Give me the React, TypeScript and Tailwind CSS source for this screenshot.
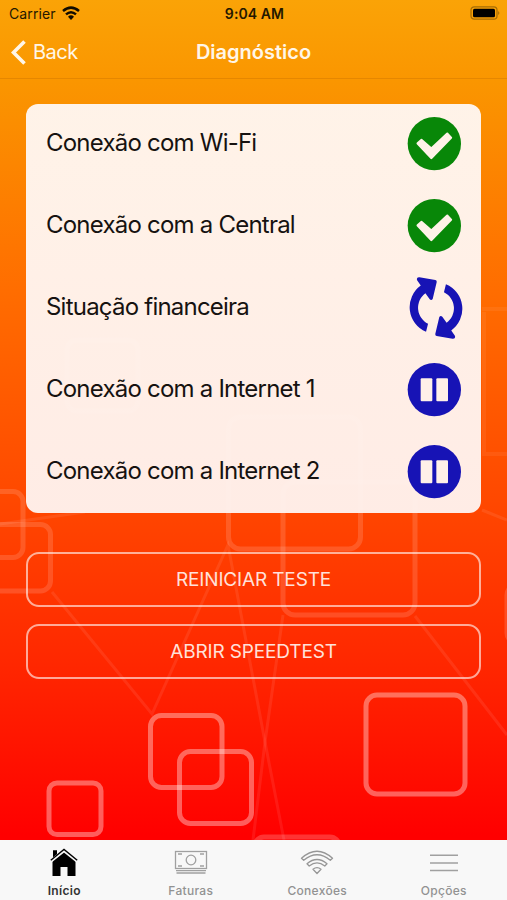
import React from 'react';

type Status = 'ok' | 'running' | 'waiting';

const CHECKS: { label: string; status: Status }[] = [
  { label: 'Conexão com Wi-Fi', status: 'ok' },
  { label: 'Conexão com a Central', status: 'ok' },
  { label: 'Situação financeira', status: 'running' },
  { label: 'Conexão com a Internet 1', status: 'waiting' },
  { label: 'Conexão com a Internet 2', status: 'waiting' },
];

function StatusIcon({ status }: { status: Status }) {
  if (status === 'running') {
    const arrow =
      'M51 165A80 80 0 0 1 35 26L24 10Q21 0 31 1L79 9Q84 10 83 16L71 66Q67 72 62 67L49 49A54 54 0 0 0 57 141Z';
    return (
      <svg viewBox="0 0 162 187" className="w-[54px] h-[62px] translate-x-[2px]" fill="#1713b5">
        <path d={arrow} />
        <path d={arrow} transform="rotate(180 81 93.5)" />
      </svg>
    );
  }
  return (
    <svg viewBox="-2 0 162 162" className="w-[54px] h-[54px] overflow-visible">
      <circle cx="80" cy="80" r="80" fill={status === 'ok' ? '#088708' : '#1713b5'} />
      {status === 'ok' ? (
        <path
          d="M30 79L41 69L71 95L119 50L130 62L71 123Z"
          fill="#fff2e8"
          stroke="#fff2e8"
          strokeWidth="7"
          strokeLinejoin="round"
        />
      ) : (
        <g fill="#fff0e8">
          <rect x="39" y="46" width="35" height="69" rx="3" />
          <rect x="86" y="46" width="35" height="69" rx="3" />
        </g>
      )}
    </svg>
  );
}

// Rounded squares joined by thin lines
function Backdrop() {
  return (
    <svg viewBox="0 0 507 900" className="absolute inset-0 w-full h-full" fill="none" stroke="#fff">
      <g strokeWidth="5" strokeOpacity="0.14">
        <rect x="-44" y="491.5" width="67" height="66" rx="10" />
        <rect x="-17" y="524.5" width="67.5" height="66.5" rx="10" />
        <rect x="228.5" y="417" width="132" height="132" rx="12" />
        <rect x="283" y="482" width="132" height="133" rx="12" />
        <rect x="67" y="340" width="71" height="71" rx="10" />
        <rect x="507" y="585" width="60" height="58" rx="10" />
      </g>
      <g strokeWidth="4" strokeOpacity="0.06">
        <path d="M482 309H507M484 312V454M482 454H507" />
      </g>
      <g strokeWidth="5" strokeOpacity="0.36">
        <rect x="150.5" y="715.5" width="71.5" height="72" rx="11" />
        <rect x="179.5" y="751.5" width="72" height="72" rx="11" />
        <rect x="49" y="783" width="52" height="51.5" rx="8" />
        <rect x="366" y="695" width="99" height="99" rx="11" />
      </g>
      <rect x="255" y="837" width="84" height="60" rx="9" strokeWidth="5" strokeOpacity="0.2" />
      <g strokeWidth="3" strokeOpacity="0.08">
        <path d="M52 592L152 714L228 545L265 742L284 840" />
        <path d="M283 615L265 742L253 840" />
        <path d="M415 616L507 735M482 510L507 520M0 524L85 512" />
      </g>
    </svg>
  );
}

function HomeIcon() {
  return (
    <svg viewBox="0 0 28 29" className="w-7 h-[29px]">
      <path d="M3 11V2.5H7V7.5L14 2.5L25.5 12.5V28H17.5V19H10.5V28H2.5V13Z" fill="#000" />
      <path d="M.8 13L14 2.5L27.2 13" fill="none" stroke="#f7f7f7" strokeWidth="3.4" />
      <path d="M3 9V2.5H7V6Z" fill="#000" />
      <path d="M.8 12.2L14 1.4L27.2 12.2" fill="none" stroke="#000" strokeWidth="1.4" />
    </svg>
  );
}

function BillsIcon() {
  return (
    <svg viewBox="0 0 34 29" className="w-[34px] h-[29px]" fill="none" stroke="#a0a0a0" strokeWidth="1.3">
      <rect x="1.5" y="3.5" width="31" height="17" />
      <circle cx="17" cy="12" r="4.8" />
      <path d="M4 6H8M26 6H30M4 18H8M26 18H30M2 22.7H32M2.5 25H31.5" />
    </svg>
  );
}

function ConnectionsIcon() {
  return (
    <svg viewBox="0 0 34 29" className="w-[34px] h-[29px]" fill="none" stroke="#979797" strokeWidth="1.3" strokeLinejoin="round">
      <path d="M1.5 10.2Q17-3.8 32.5 10.2L30.3 12.3Q17 1.2 3.7 12.3Z" />
      <path d="M7 15.8Q17 7.2 27 15.8L24.8 18Q17 11.8 9.2 18Z" />
      <path d="M13 21.3Q17 18 21 21.3L17 25.5Z" />
    </svg>
  );
}

function MenuIcon() {
  return (
    <svg viewBox="0 0 28 29" className="w-7 h-[29px]" stroke="#a0a0a0" strokeWidth="1.6">
      <path d="M0 7.3H28M0 15H28M0 22.5H28" />
    </svg>
  );
}

const TABS = [
  { label: 'Início', icon: <HomeIcon />, active: true },
  { label: 'Faturas', icon: <BillsIcon />, active: false },
  { label: 'Conexões', icon: <ConnectionsIcon />, active: false },
  { label: 'Opções', icon: <MenuIcon />, active: false },
];

const ACTIONS = ['REINICIAR TESTE', 'ABRIR SPEEDTEST'];

export default function App() {
  return (
    <div className="relative w-[507px] h-[900px] overflow-hidden bg-[linear-gradient(to_bottom,#faa307_0px,#fa9600_80px,#ff6d00_290px,#ff4800_500px,#ff2800_660px,#ff0000_835px)] font-['Inter',sans-serif]">
      <Backdrop />

      <div className="relative flex flex-col h-full">
        <header className="h-[79px] border-b border-[#d97d00]/60">
          <div className="grid grid-cols-3 items-center h-7 pl-[9px] pr-[7px] text-sm text-[#241800]">
            <div className="flex items-center gap-1.5">
              <span className="tracking-[0.1px]">Carrier</span>
              <svg viewBox="0 0 18 14" className="w-[18px] h-[14px] -mt-0.5" fill="none" stroke="#120c00" strokeWidth="2.5">
                <path d="M1 5Q9-1.8 17 5M4 8.4Q9 4 14 8.4" />
                <path d="M6 10.7Q9 8 12 10.7L9 14Z" fill="#120c00" stroke="none" />
              </svg>
            </div>
            <span className="text-center font-semibold tracking-[0.1px] whitespace-nowrap">9:04 AM</span>
            <svg viewBox="0 0 30 14" className="w-[30px] h-[14px] justify-self-end -mt-0.5">
              <rect x="1" y="0.8" width="26" height="12.4" rx="3.2" fill="none" stroke="#a56c05" strokeWidth="1.2" />
              <rect x="3" y="2.7" width="22" height="8.6" rx="1.5" fill="#000" />
              <path d="M28.2 5Q30.5 7 28.2 9Z" fill="#a56c05" />
            </svg>
          </div>

          <div className="grid grid-cols-3 items-center h-12 px-[11px] text-[#fff6e8]">
            <button className="flex items-center gap-[7px] text-[20px] tracking-[-0.5px]">
              <svg viewBox="0 0 15 25" className="w-[15px] h-[25px]" fill="none" stroke="currentColor" strokeWidth="3.6">
                <path d="M13.5 1.5L2.5 12.5L13.5 23.5" />
              </svg>
              Back
            </button>
            <h1 className="text-center text-[20px] font-semibold">Diagnóstico</h1>
          </div>
        </header>

        <main className="flex-1 px-[26px] pt-[24.5px]">
          <ul className="h-[409px] rounded-xl bg-linear-to-b from-[#fff7f2]/96 to-[#fff3ef]/96">
            {CHECKS.map((c) => (
              <li key={c.label} className="flex items-center justify-between h-[81.8px] px-5 text-[24px] text-[#161210]">
                <span className="-mt-0.5 tracking-[-0.78px] whitespace-nowrap">{c.label}</span>
                <StatusIcon status={c.status} />
              </li>
            ))}
          </ul>

          <div className="flex flex-col gap-[17px] pt-[39px]">
            {ACTIONS.map((a) => (
              <button
                key={a}
                className="h-[55px] pt-0.5 rounded-[13px] border-2 border-white/60 text-[19px] text-[#ffe1da] tracking-[-0.15px]"
              >
                {a}
              </button>
            ))}
          </div>
        </main>

        <nav className="grid grid-cols-4 h-[60px] pl-px bg-[#f8f8f8]">
          {TABS.map((t) => (
            <button
              key={t.label}
              className={`flex flex-col items-center pt-2 text-[12px] tracking-[0.3px] ${t.active ? 'font-semibold text-[#333]' : 'font-medium text-[#929292]'}`}
            >
              {t.icon}
              <span className="mt-1.5 leading-4">{t.label}</span>
            </button>
          ))}
        </nav>
      </div>
    </div>
  );
}
